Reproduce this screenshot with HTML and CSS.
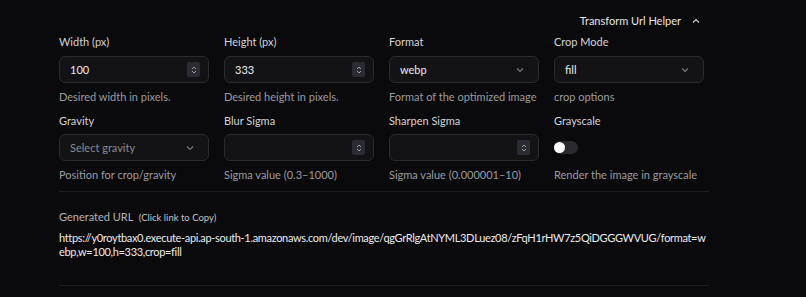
FILE: index.html
```
<!DOCTYPE html>
<html lang="en">
<head>
  <meta charset="UTF-8">
  <title>Transform Url Helper</title>
  <link rel="stylesheet" href="styles.css">
</head>
<body>
  <div class="panel">
    <div class="panel-head">
      <span class="panel-title">Transform Url Helper</span>
      <svg class="head-chev" width="10" height="10" viewBox="0 0 10 10"><path d="M2 6.5 L5 3.5 L8 6.5" fill="none" stroke="#cfcfd4" stroke-width="1.2"/></svg>
    </div>

    <div class="grid">
      <div class="field">
        <label class="field-label">Width (px)</label>
        <div class="input"><span class="value">100</span><span class="spin"><svg width="8" height="12" viewBox="0 0 8 12"><path d="M2 5 L4 3 L6 5 M2 7 L4 9 L6 7" fill="none" stroke="#9a9aa4" stroke-width="1"/></svg></span></div>
        <div class="help">Desired width in pixels.</div>
      </div>
      <div class="field">
        <label class="field-label">Height (px)</label>
        <div class="input"><span class="value">333</span><span class="spin"><svg width="8" height="12" viewBox="0 0 8 12"><path d="M2 5 L4 3 L6 5 M2 7 L4 9 L6 7" fill="none" stroke="#9a9aa4" stroke-width="1"/></svg></span></div>
        <div class="help">Desired height in pixels.</div>
      </div>
      <div class="field">
        <label class="field-label">Format</label>
        <div class="input"><span class="value">webp</span><svg class="chev" width="10" height="10" viewBox="0 0 10 10"><path d="M2 3.5 L5 6.5 L8 3.5" fill="none" stroke="#7c7c84" stroke-width="1.1"/></svg></div>
        <div class="help">Format of the optimized image</div>
      </div>
      <div class="field">
        <label class="field-label">Crop Mode</label>
        <div class="input"><span class="value">fill</span><svg class="chev" width="10" height="10" viewBox="0 0 10 10"><path d="M2 3.5 L5 6.5 L8 3.5" fill="none" stroke="#7c7c84" stroke-width="1.1"/></svg></div>
        <div class="help">crop options</div>
      </div>

      <div class="field row2">
        <label class="field-label">Gravity</label>
        <div class="input"><span class="value placeholder">Select gravity</span><svg class="chev" width="10" height="10" viewBox="0 0 10 10"><path d="M2 3.5 L5 6.5 L8 3.5" fill="none" stroke="#7c7c84" stroke-width="1.1"/></svg></div>
        <div class="help">Position for crop/gravity</div>
      </div>
      <div class="field row2">
        <label class="field-label">Blur Sigma</label>
        <div class="input"><span class="value"></span><span class="spin"><svg width="8" height="12" viewBox="0 0 8 12"><path d="M2 5 L4 3 L6 5 M2 7 L4 9 L6 7" fill="none" stroke="#9a9aa4" stroke-width="1"/></svg></span></div>
        <div class="help">Sigma value (0.3–1000)</div>
      </div>
      <div class="field row2">
        <label class="field-label">Sharpen Sigma</label>
        <div class="input"><span class="value"></span><span class="spin"><svg width="8" height="12" viewBox="0 0 8 12"><path d="M2 5 L4 3 L6 5 M2 7 L4 9 L6 7" fill="none" stroke="#9a9aa4" stroke-width="1"/></svg></span></div>
        <div class="help">Sigma value (0.000001–10)</div>
      </div>
      <div class="field row2">
        <label class="field-label">Grayscale</label>
        <div class="toggle-wrap"><span class="toggle"><span class="knob"></span></span></div>
        <div class="help">Render the image in grayscale</div>
      </div>
    </div>

    <div class="result">
      <div class="result-label">Generated URL <span class="hint">(Click link to Copy)</span></div>
      <div class="url">https://y0roytbax0.execute-api.ap-south-1.amazonaws.com/dev/image/qgGrRlgAtNYML3DLuez08/zFqH1rHW7z5QiDGGGWVUG/format=webp,w=100,h=333,crop=fill</div>
    </div>
  </div>
</body>
</html>
```

FILE: styles.css
```
* {
  margin: 0;
  padding: 0;
  box-sizing: border-box;
}

body {
  background-color: #0a0a0c;
  font-family: Lato, "Liberation Sans", sans-serif;
  font-size: 11px;
  color: #d6d6da;
}

.panel {
  width: 650px;
  margin-left: 59px;
}

.panel-head {
  display: flex;
  justify-content: flex-end;
  align-items: center;
  height: 16px;
  margin-top: 13px;
  padding-right: 8px;
}

.panel-title {
  color: #e6e6ea;
  line-height: 16px;
}

.head-chev {
  margin-left: 10px;
}

.grid {
  display: grid;
  grid-template-columns: repeat(4, 150px);
  column-gap: 15px;
  margin-top: 5px;
}

.field {
  display: flex;
  flex-direction: column;
}

.row2 {
  margin-top: 8px;
}

.field-label {
  line-height: 16px;
  color: #d4d4d8;
}

.input {
  display: flex;
  align-items: center;
  height: 27px;
  margin-top: 6px;
  padding: 0 8px 0 10px;
  background-color: #131316;
  border: 1px solid #2a2a2f;
  border-radius: 6px;
}

.row2 .input,
.row2 .toggle-wrap {
  margin-top: 5px;
}

.value {
  flex: 1;
  color: #ececef;
}

.placeholder {
  color: #8a8a90;
}

.spin {
  display: flex;
  align-items: center;
  justify-content: center;
  width: 13px;
  height: 15px;
  background-color: #2b2b33;
  border-radius: 2px;
}

.chev {
  margin-right: 5px;
}

.toggle-wrap {
  display: flex;
  align-items: center;
  height: 27px;
  margin-top: 6px;
}

.toggle {
  display: inline-block;
  position: relative;
  width: 24px;
  height: 13px;
  background-color: #2a2a2e;
  border-radius: 7px;
}

.knob {
  position: absolute;
  left: 0;
  top: 1px;
  width: 11px;
  height: 11px;
  background-color: #fff;
  border-radius: 50%;
}

.help {
  margin-top: 6px;
  line-height: 16px;
  color: #9b9ba1;
  white-space: nowrap;
}

.result {
  margin-top: 8px;
  border-top: 1px solid #1f1f23;
  border-bottom: 1px solid #1f1f23;
  padding: 17px 0 26px;
}

.result-label {
  line-height: 16px;
  color: #b4b4b9;
}

.hint {
  margin-left: 3px;
  font-size: 9.5px;
  color: #c4c4c8;
}

.url {
  margin-top: 5px;
  line-height: 14px;
  color: #ececef;
  letter-spacing: -0.33px;
  word-break: break-all;
  cursor: pointer;
}
```
